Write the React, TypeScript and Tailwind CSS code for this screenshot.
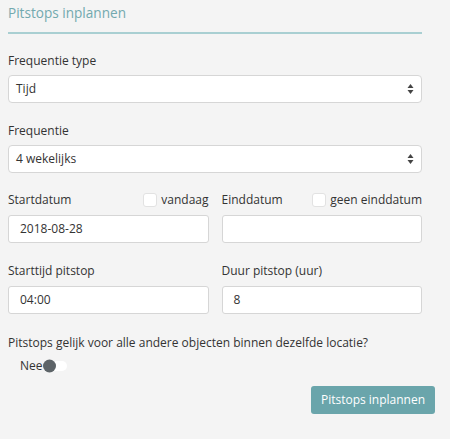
import { useState } from "react";

const font = { fontFamily: '"Open Sans", "Liberation Sans", sans-serif' };

function SelectArrows() {
  return (
    <svg width="7" height="11" viewBox="0 0 7 11" className="absolute right-[7px] top-1/2 -translate-y-1/2">
      <path d="M3.5 0.5 L6.5 4.5 L0.5 4.5 Z" fill="#444" />
      <path d="M3.5 10.5 L6.5 6.5 L0.5 6.5 Z" fill="#444" />
    </svg>
  );
}

function FakeSelect({ value }: { value: string }) {
  return (
    <div className="relative flex h-[28px] w-full items-center rounded-[4px] border border-[#d6d6d6] bg-white pl-[7px] text-[12px] text-[#333]">
      {value}
      <SelectArrows />
    </div>
  );
}

function TextInput({ value }: { value: string }) {
  return (
    <div className="flex h-[28px] w-full items-center rounded-[3px] border border-[#d6d6d6] bg-white pl-[11px] text-[12px] text-[#333]">
      {value}
    </div>
  );
}

function Check({ label }: { label: string }) {
  return (
    <label className="flex items-center gap-[4px]">
      <span className="h-[14px] w-[14px] rounded-[3px] border border-[#e2e2e2] bg-white" />
      <span>{label}</span>
    </label>
  );
}

export default function App() {
  const [same, setSame] = useState(false);

  return (
    <div className="min-h-[439px] w-[450px] bg-[#f4f4f4] px-2 pt-[3px] text-[12px] leading-[18px] text-[#333]" style={font}>
      <div className="w-[414px]">
        <h2 className="h-5 text-[13.6px] leading-5 text-[#72a9af]">Pitstops inplannen</h2>
        <div className="mt-[9px] h-[2px] bg-[#a9cfd2]" />

        <div className="mt-[18px]">Frequentie type</div>
        <div className="mt-[5px]">
          <FakeSelect value="Tijd" />
        </div>

        <div className="mt-[19px]">Frequentie</div>
        <div className="mt-[5px]">
          <FakeSelect value="4 wekelijks" />
        </div>

        <div className="mt-[18px] grid grid-cols-2 gap-x-[13px]">
          <div>
            <div className="flex items-center justify-between">
              <span>Startdatum</span>
              <Check label="vandaag" />
            </div>
            <div className="mt-[6px]">
              <TextInput value="2018-08-28" />
            </div>
          </div>
          <div>
            <div className="flex items-center justify-between">
              <span>Einddatum</span>
              <Check label="geen einddatum" />
            </div>
            <div className="mt-[6px]">
              <TextInput value="" />
            </div>
          </div>
        </div>

        <div className="mt-[19px] grid grid-cols-2 gap-x-[13px]">
          <div>
            <div>Starttijd pitstop</div>
            <div className="mt-[6px]">
              <TextInput value="04:00" />
            </div>
          </div>
          <div>
            <div>Duur pitstop (uur)</div>
            <div className="mt-[6px]">
              <TextInput value="8" />
            </div>
          </div>
        </div>

        <div className="mt-[20px]">Pitstops gelijk voor alle andere objecten binnen dezelfde locatie?</div>
        <div className="mt-[5px] flex items-center pl-3">
          <span>{same ? "Ja" : "Nee"}</span>
          <button
            type="button"
            onClick={() => setSame(!same)}
            className="relative h-[10px] w-[24px] rounded-full bg-white"
          >
            <span
              className={
                same
                  ? "absolute left-[11px] top-1/2 h-[13px] w-[13px] -translate-y-1/2 rounded-full bg-[#5d6468]"
                  : "absolute left-0 top-1/2 h-[13px] w-[13px] -translate-y-1/2 rounded-full bg-[#5d6468]"
              }
            />
          </button>
        </div>
      </div>

      <div className="mt-[11px] flex w-[427px] justify-end">
        <button
          type="button"
          className="h-[28px] w-[124px] rounded-[3px] bg-[#6aa5ab] text-[12px] text-white"
        >
          Pitstops inplannen
        </button>
      </div>
    </div>
  );
}
